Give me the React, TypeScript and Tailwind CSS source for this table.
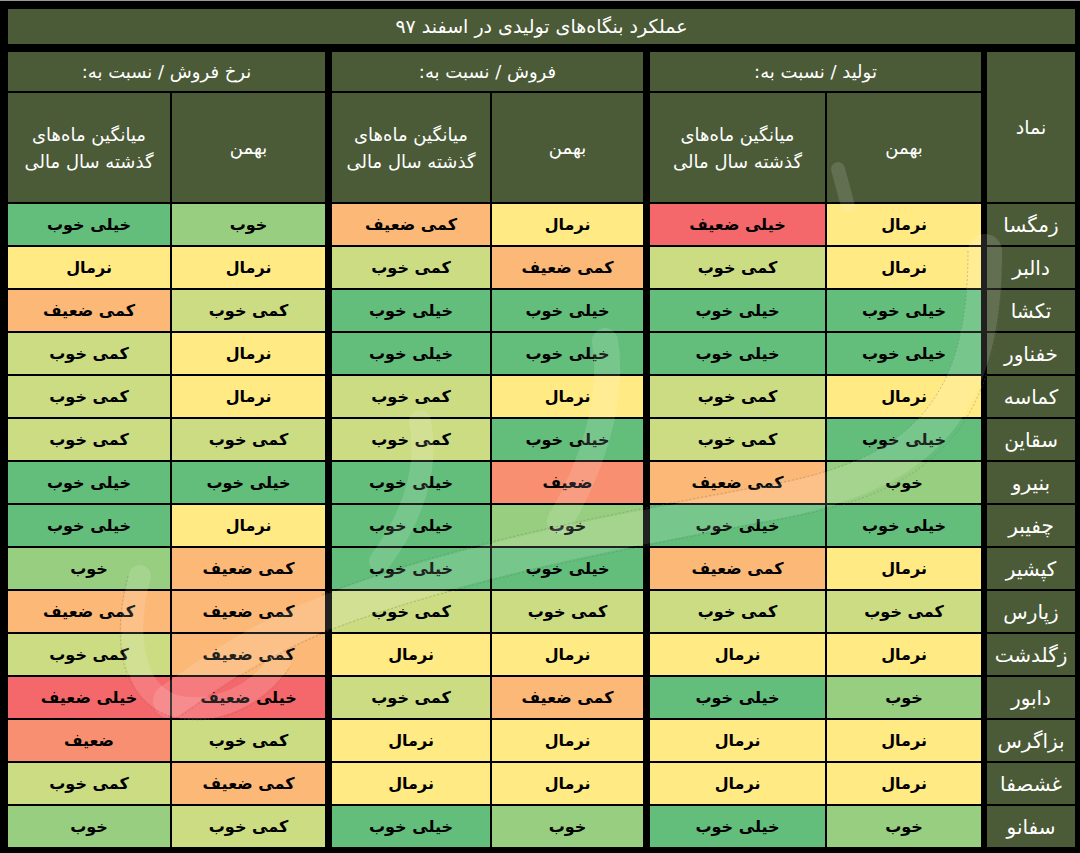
import React from 'react';

const tone: Record<string, string> = {
  'خیلی خوب': 'bg-[#63be7b]',
  'خوب': 'bg-[#98ce7f]',
  'کمی خوب': 'bg-[#cbdc82]',
  'نرمال': 'bg-[#ffea84]',
  'کمی ضعیف': 'bg-[#fbb877]',
  'ضعیف': 'bg-[#f88f70]',
  'خیلی ضعیف': 'bg-[#f4686b]',
};

// [symbol, production(bahman, avg), sales(bahman, avg), price(bahman, avg)]
const rows: string[][] = [
  ['زمگسا', 'نرمال', 'خیلی ضعیف', 'نرمال', 'کمی ضعیف', 'خوب', 'خیلی خوب'],
  ['دالبر', 'نرمال', 'کمی خوب', 'کمی ضعیف', 'کمی خوب', 'نرمال', 'نرمال'],
  ['تکشا', 'خیلی خوب', 'خیلی خوب', 'خیلی خوب', 'خیلی خوب', 'کمی خوب', 'کمی ضعیف'],
  ['خفناور', 'خیلی خوب', 'خیلی خوب', 'خیلی خوب', 'خیلی خوب', 'نرمال', 'کمی خوب'],
  ['کماسه', 'نرمال', 'کمی خوب', 'نرمال', 'کمی خوب', 'نرمال', 'کمی خوب'],
  ['سقاین', 'خیلی خوب', 'کمی خوب', 'خیلی خوب', 'کمی خوب', 'کمی خوب', 'کمی خوب'],
  ['بنیرو', 'خوب', 'کمی ضعیف', 'ضعیف', 'خیلی خوب', 'خیلی خوب', 'خیلی خوب'],
  ['چفیبر', 'خیلی خوب', 'خیلی خوب', 'خوب', 'خیلی خوب', 'نرمال', 'خیلی خوب'],
  ['کپشیر', 'نرمال', 'کمی ضعیف', 'خیلی خوب', 'خیلی خوب', 'کمی ضعیف', 'خوب'],
  ['زپارس', 'کمی خوب', 'کمی خوب', 'کمی خوب', 'کمی خوب', 'کمی ضعیف', 'کمی ضعیف'],
  ['زگلدشت', 'نرمال', 'نرمال', 'نرمال', 'نرمال', 'کمی ضعیف', 'کمی خوب'],
  ['دابور', 'خوب', 'خیلی خوب', 'کمی ضعیف', 'کمی خوب', 'خیلی ضعیف', 'خیلی ضعیف'],
  ['بزاگرس', 'نرمال', 'نرمال', 'نرمال', 'نرمال', 'کمی خوب', 'ضعیف'],
  ['غشصفا', 'نرمال', 'نرمال', 'نرمال', 'نرمال', 'کمی ضعیف', 'کمی خوب'],
  ['سفانو', 'خوب', 'خیلی خوب', 'خوب', 'خیلی خوب', 'کمی خوب', 'خوب'],
];

const groups = [
  { title: 'تولید / نسبت به:', cols: 'grid-cols-[154px_175px]', from: 1 },
  { title: 'فروش / نسبت به:', cols: 'grid-cols-[151px_158px]', from: 3 },
  { title: 'نرخ فروش / نسبت به:', cols: 'grid-cols-[153px_162px]', from: 5 },
];

function Group({ title, cols, from }: { title: string; cols: string; from: number }) {
  return (
    <div className={`grid ${cols} grid-rows-[39px_109px_repeat(15,41px)] gap-[2px]`}>
      <div className="col-span-2 bg-[#4b5a37] text-white text-[18px] flex items-center justify-center">
        {title}
      </div>
      <div className="bg-[#4b5a37] text-white text-[18px] flex items-center justify-center">
        بهمن
      </div>
      <div className="bg-[#4b5a37] text-white text-[18px] leading-[27px] flex flex-col items-center justify-center">
        <span>میانگین ماه‌های</span>
        <span>گذشته سال مالی</span>
      </div>
      {rows.map((r) =>
        [r[from], r[from + 1]].map((v, i) => (
          <div
            key={r[0] + i}
            className={`${tone[v]} text-black font-bold text-[16px] flex items-center justify-center`}
          >
            {v}
          </div>
        ))
      )}
    </div>
  );
}

export default function App() {
  return (
    <div
      dir="rtl"
      className="relative w-[1080px] h-[853px] overflow-hidden bg-black border-t border-[#9a9a9a] pt-[8px] pr-[5px] pl-[8px] font-['DejaVu_Sans',sans-serif]"
    >
      <div className="h-[35px] bg-[#4b5a37] text-white text-[19px] flex items-center justify-center">
        عملکرد بنگاه‌های تولیدی در اسفند ۹۷
      </div>

      <div className="mt-[8px] flex">
        <div className="w-[88px] ml-[6px] flex flex-col gap-[2px]">
          <div className="h-[150px] bg-[#4b5a37] text-white text-[19px] flex items-center justify-center">
            نماد
          </div>
          {rows.map((r) => (
            <div
              key={r[0]}
              className="h-[41px] bg-[#4b5a37] text-white text-[20px] flex items-center justify-center"
            >
              {r[0]}
            </div>
          ))}
        </div>
        <div className="flex gap-[7px]">
          {groups.map((g) => (
            <Group key={g.title} {...g} />
          ))}
        </div>
      </div>

      {/* faint logo watermark over the table */}
      <svg
        className="absolute inset-0 pointer-events-none"
        width="1080"
        height="853"
        viewBox="0 0 1080 853"
        fill="none"
      >
        <g stroke="#ffffff" strokeOpacity="0.13" strokeLinecap="round">
          <path d="M985 250 C 985 400, 930 470, 780 500 C 620 530, 460 560, 330 610 C 250 640, 200 680, 170 700" strokeWidth="34" />
          <path d="M140 575 C 125 630, 130 690, 175 705 C 220 715, 260 690, 280 660" strokeWidth="22" />
          <path d="M605 340 C 615 400, 590 470, 560 520" strokeWidth="26" />
          <path d="M420 420 C 430 470, 410 520, 380 560" strokeWidth="22" />
          <path d="M838 168 L 848 205" strokeWidth="14" />
        </g>
        <g stroke="#6b6b6b" strokeOpacity="0.35" strokeWidth="1" strokeDasharray="2 2">
          <path d="M1002 255 C 1002 420, 940 490, 782 518 C 625 548, 468 578, 338 626 C 262 656, 212 694, 182 714" />
          <path d="M968 250 C 968 390, 920 455, 778 482 C 615 512, 452 542, 322 594" />
          <path d="M128 575 C 112 635, 118 700, 172 716 C 226 728, 268 700, 290 666" />
        </g>
      </svg>
    </div>
  );
}
